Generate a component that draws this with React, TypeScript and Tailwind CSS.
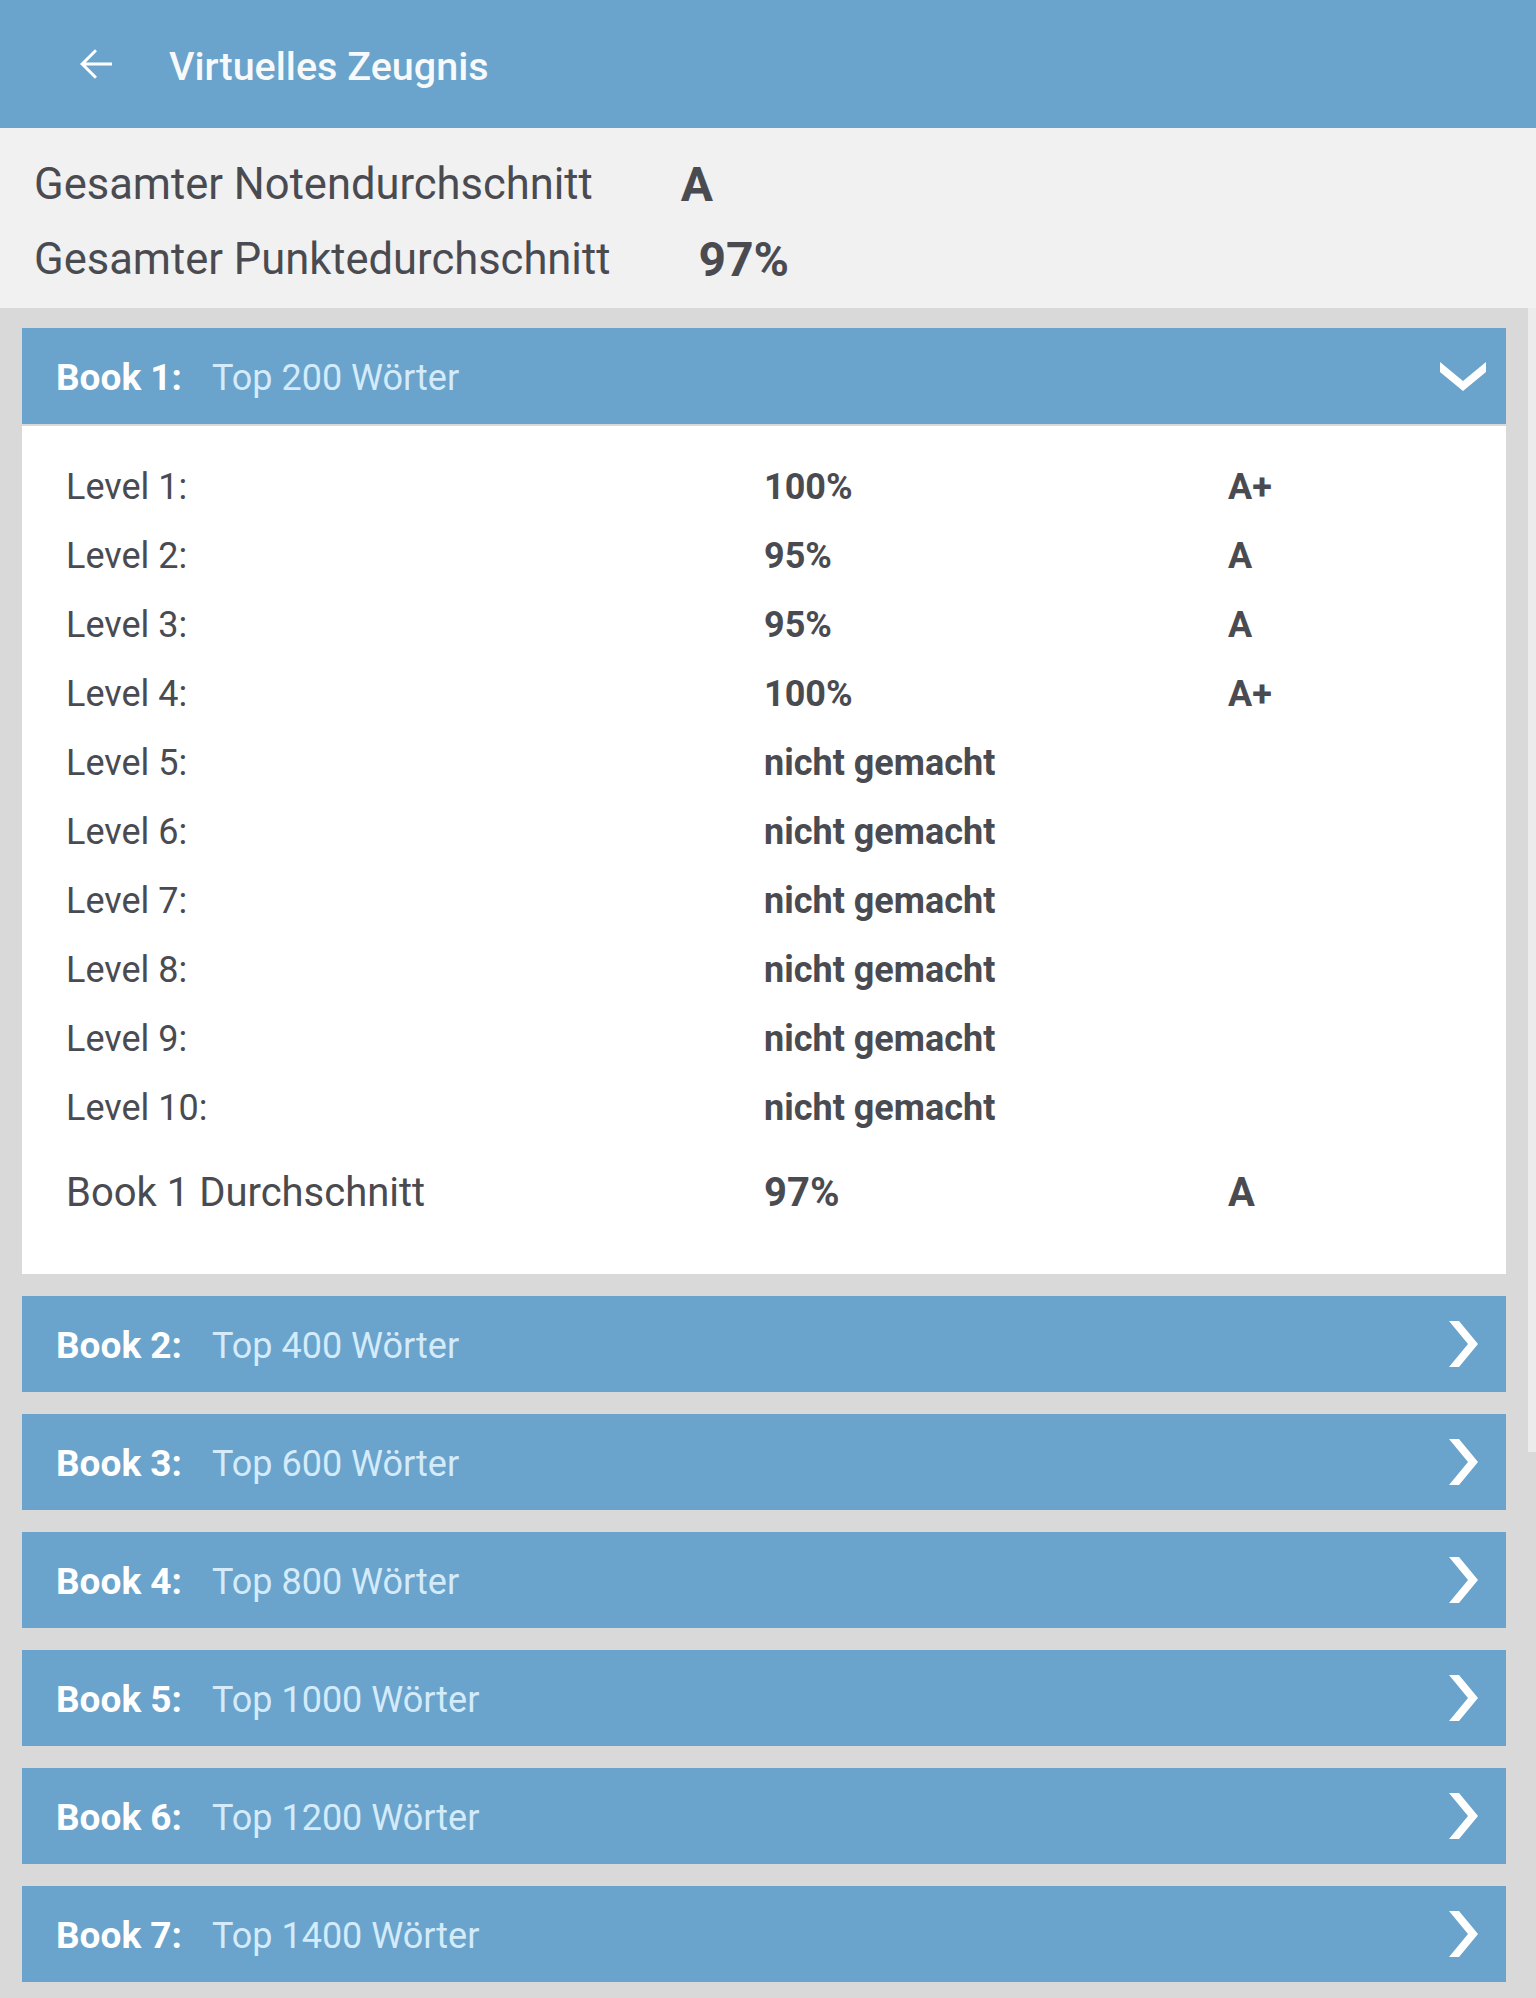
import React from "react"

const levels = [
  { name: "Level 1:", score: "100%", grade: "A+" },
  { name: "Level 2:", score: "95%", grade: "A" },
  { name: "Level 3:", score: "95%", grade: "A" },
  { name: "Level 4:", score: "100%", grade: "A+" },
  { name: "Level 5:", score: "nicht gemacht", grade: "" },
  { name: "Level 6:", score: "nicht gemacht", grade: "" },
  { name: "Level 7:", score: "nicht gemacht", grade: "" },
  { name: "Level 8:", score: "nicht gemacht", grade: "" },
  { name: "Level 9:", score: "nicht gemacht", grade: "" },
  { name: "Level 10:", score: "nicht gemacht", grade: "" },
]

const books = [
  { id: 2, title: "Top 400 Wörter" },
  { id: 3, title: "Top 600 Wörter" },
  { id: 4, title: "Top 800 Wörter" },
  { id: 5, title: "Top 1000 Wörter" },
  { id: 6, title: "Top 1200 Wörter" },
  { id: 7, title: "Top 1400 Wörter" },
]

function ChevronRight() {
  return (
    <svg width="29" height="46" viewBox="0 0 29 46" className="mr-[28px]">
      <polygon points="0,0 10,0 29,23 10,46 0,46 19,23" fill="#ffffff" />
    </svg>
  )
}

function ChevronDown() {
  return (
    <svg width="46" height="29" viewBox="0 0 46 29" className="mr-[20px]">
      <polygon points="0,0 23,19 46,0 46,10 23,29 0,10" fill="#ffffff" />
    </svg>
  )
}

function BookHeader({ id, title, open }: { id: number; title: string; open?: boolean }) {
  return (
    <div className="h-[96px] bg-[#6aa3cb] flex items-center pl-[34px]">
      <span className="w-[156px] pt-[4px] text-[37px] font-bold text-white">Book {id}:</span>
      <span className="pt-[4px] text-[36px] text-[#d3ebfa]">{title}</span>
      <span className="ml-auto flex items-center">{open ? <ChevronDown /> : <ChevronRight />}</span>
    </div>
  )
}

export default function App() {
  return (
    <div className="min-h-[1998px] bg-[#d9d9d9] font-['Roboto',sans-serif] text-[#4a4b51]">
      {/* App bar */}
      <header className="h-[128px] bg-[#6aa3cb] flex items-center">
        <svg width="48" height="48" viewBox="0 0 24 24" className="ml-[72px]">
          <path d="M20 11.25H6.9l5.6-5.6L11.45 4.6 4 12l7.45 7.4 1.05-1.05-5.6-5.6H20z" fill="#ffffff" />
        </svg>
        <span className="ml-[49px] pt-[5px] text-[39.5px] font-medium text-[#f7f9fb]">Virtuelles Zeugnis</span>
      </header>

      {/* Overall averages */}
      <section className="h-[180px] bg-[#f1f1f1] px-[34px] pt-[8px] flex flex-col justify-center">
        <div className="h-[75px] flex items-center">
          <span className="text-[43.5px]">Gesamter Notendurchschnitt</span>
          <span className="ml-[88px] text-[48px] font-bold">A</span>
        </div>
        <div className="h-[75px] flex items-center">
          <span className="text-[43.5px]">Gesamter Punktedurchschnitt</span>
          <span className="ml-[88px] text-[48px] font-bold">97%</span>
        </div>
      </section>

      <div className="flex">
        <main className="flex-1 px-[22px] pt-[20px] flex flex-col gap-[22px]">
          <div>
            <BookHeader id={1} title="Top 200 Wörter" open />
            <div className="mt-[2px] bg-white pl-[44px] pt-[26px] pb-[47px]">
              {levels.map((lvl) => (
                <div key={lvl.name} className="h-[69px] grid grid-cols-[698px_464px_1fr] items-center text-[36px]">
                  <span>{lvl.name}</span>
                  <span className="font-bold">{lvl.score}</span>
                  <span className="font-bold">{lvl.grade}</span>
                </div>
              ))}
              <div className="mt-[16px] h-[69px] grid grid-cols-[698px_464px_1fr] items-center text-[40px]">
                <span>Book 1 Durchschnitt</span>
                <span className="font-bold">97%</span>
                <span className="font-bold">A</span>
              </div>
            </div>
          </div>
          {books.map((b) => (
            <BookHeader key={b.id} id={b.id} title={b.title} />
          ))}
        </main>
        {/* scrollbar */}
        <div className="w-[8px]">
          <div className="h-[1144px] bg-[#ececec]" />
        </div>
      </div>
    </div>
  )
}
